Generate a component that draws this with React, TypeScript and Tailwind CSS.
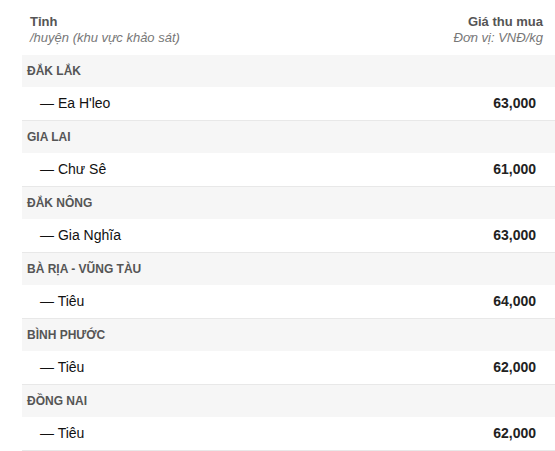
const ROWS = [
  { province: "ĐẮK LẮK", district: "Ea H'leo", price: "63,000" },
  { province: "GIA LAI", district: "Chư Sê", price: "61,000" },
  { province: "ĐẮK NÔNG", district: "Gia Nghĩa", price: "63,000" },
  { province: "BÀ RỊA - VŨNG TÀU", district: "Tiêu", price: "64,000" },
  { province: "BÌNH PHƯỚC", district: "Tiêu", price: "62,000" },
  { province: "ĐỒNG NAI", district: "Tiêu", price: "62,000" },
];

export default function App() {
  return (
    <div
      className="w-[555px] h-[451px] bg-white overflow-hidden"
      style={{ fontFamily: '"Liberation Sans", Arial, sans-serif' }}
    >
      <div className="ml-[22px]">
        {/* Header */}
        <div className="flex justify-between items-start h-[55px] pt-[14px] pl-[8px] pr-[12px]">
          <div className="flex flex-col">
            <span className="text-[13px] leading-[16px] font-bold text-[#555]">Tỉnh</span>
            <span className="text-[13px] leading-[16px] italic text-[#777]">/huyện (khu vực khảo sát)</span>
          </div>
          <div className="flex flex-col items-end">
            <span className="text-[13px] leading-[16px] font-bold text-[#555]">Giá thu mua</span>
            <span className="text-[13px] leading-[16px] italic text-[#777]">Đơn vị: VNĐ/kg</span>
          </div>
        </div>

        {/* Rows */}
        {ROWS.map((r) => (
          <div key={r.province}>
            <div className="h-[32px] bg-[#f6f6f6] flex items-center pl-[5px] text-[12px] font-bold text-[#555]">
              {r.province}
            </div>
            <div className="h-[34px] border-b border-[#e8e8e8] flex items-center justify-between pl-[18px] pr-[19px] text-[14px] text-[#111]">
              <span>— {r.district}</span>
              <span className="font-bold text-[#222]">{r.price}</span>
            </div>
          </div>
        ))}
      </div>
    </div>
  );
}
